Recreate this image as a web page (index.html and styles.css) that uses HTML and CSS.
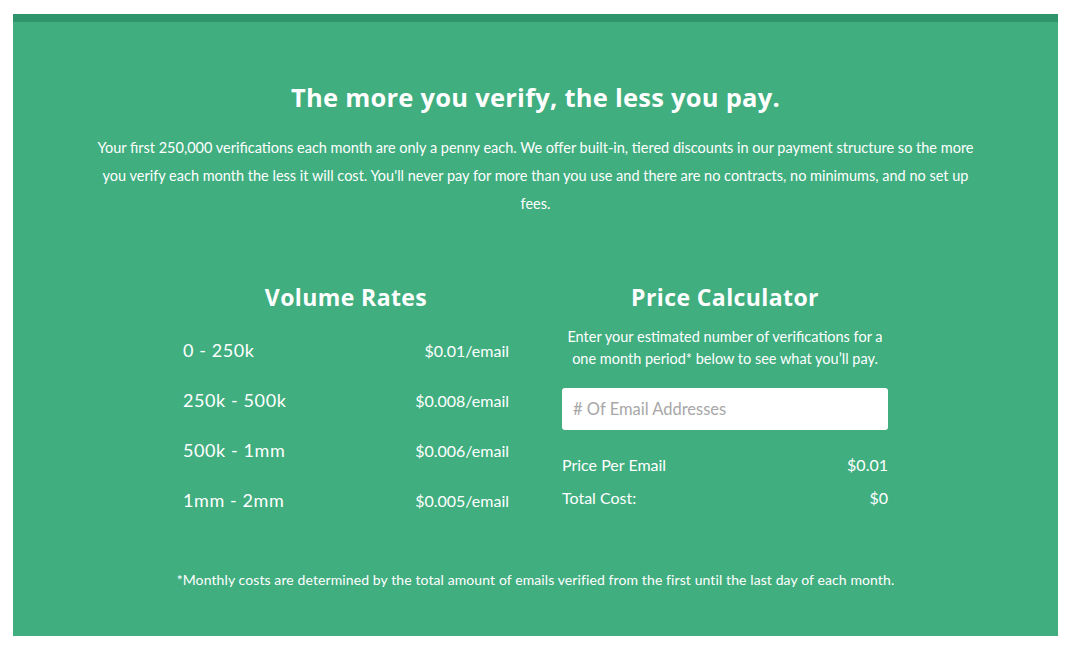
FILE: index.html
```html
<!DOCTYPE html>
<html>
<head>
<meta charset="utf-8">
<link rel="stylesheet" href="styles.css">
</head>
<body>
<section class="pricing">
  <h1 class="title">The more you verify, the less you pay.</h1>
  <p class="intro">Your first 250,000 verifications each month are only a penny each. We offer built-in, tiered discounts in our payment structure so the more you verify each month the less it will cost. You'll never pay for more than you use and there are no contracts, no minimums, and no set up fees.</p>
  <div class="columns">
    <div class="col">
      <h2 class="col-title">Volume Rates</h2>
      <ul class="rates">
        <li class="rate"><span class="range">0 - 250k</span><span class="price">$0.01/email</span></li>
        <li class="rate"><span class="range">250k - 500k</span><span class="price">$0.008/email</span></li>
        <li class="rate"><span class="range">500k - 1mm</span><span class="price">$0.006/email</span></li>
        <li class="rate"><span class="range">1mm - 2mm</span><span class="price">$0.005/email</span></li>
      </ul>
    </div>
    <div class="col">
      <h2 class="col-title">Price Calculator</h2>
      <p class="calc-desc">Enter your estimated number of verifications for a one month period* below to see what you’ll pay.</p>
      <input class="calc-input" type="text" placeholder="# Of Email Addresses">
      <div class="result"><span>Price Per Email</span><span>$0.01</span></div>
      <div class="result"><span>Total Cost:</span><span>$0</span></div>
    </div>
  </div>
  <p class="footnote">*Monthly costs are determined by the total amount of emails verified from the first until the last day of each month.</p>
</section>
</body>
</html>
```
FILE: styles.css
```css
html, body {
  margin: 0;
  padding: 0;
  background: #ffffff;
}
body {
  padding: 14px 21px 14px 13px;
  font-family: "Lato", "Open Sans", sans-serif;
  color: #ffffff;
}
.pricing {
  background: #40ae7f;
  border-top: 8px solid #2f946b;
  height: 614px;
  box-sizing: content-box;
  display: flex;
  flex-direction: column;
  align-items: center;
}
.title {
  margin: 60px 0 0;
  font-family: "Open Sans", sans-serif;
  font-weight: 700;
  font-size: 25.5px;
  line-height: 30px;
  letter-spacing: 0.25px;
}
.intro {
  margin: 22px 0 0;
  width: 880px;
  text-align: center;
  font-size: 14.5px;
  line-height: 28px;
}
.columns {
  margin-top: 66px;
  display: flex;
  gap: 53px;
}
.col {
  width: 326px;
  display: flex;
  flex-direction: column;
}
.col-title {
  margin: 0;
  text-align: center;
  font-family: "Open Sans", sans-serif;
  font-weight: 700;
  font-size: 23px;
  line-height: 26px;
  letter-spacing: 0.4px;
}
.rates {
  list-style: none;
  margin: 15px 0 0;
  padding: 0;
}
.rate {
  display: flex;
  justify-content: space-between;
  align-items: center;
  height: 50px;
}
.range {
  font-size: 18px;
  letter-spacing: 0.6px;
}
.price {
  font-size: 16px;
}
.calc-desc {
  margin: 16px 0 0;
  text-align: center;
  font-size: 14.5px;
  line-height: 22px;
}
.calc-input {
  margin-top: 18px;
  height: 42px;
  box-sizing: border-box;
  border: none;
  border-radius: 3px;
  padding: 0 11px;
  font-family: "Lato", sans-serif;
  font-size: 16.5px;
  background: #ffffff;
}
.calc-input::placeholder {
  color: #a7a7a7;
}
.result {
  display: flex;
  justify-content: space-between;
  font-size: 16px;
  line-height: 22px;
  margin-top: 11px;
}
.result:first-of-type {
  margin-top: 24px;
}
.footnote {
  margin: 45px 0 0;
  font-size: 14px;
  line-height: 20px;
  letter-spacing: 0.1px;
}
```
